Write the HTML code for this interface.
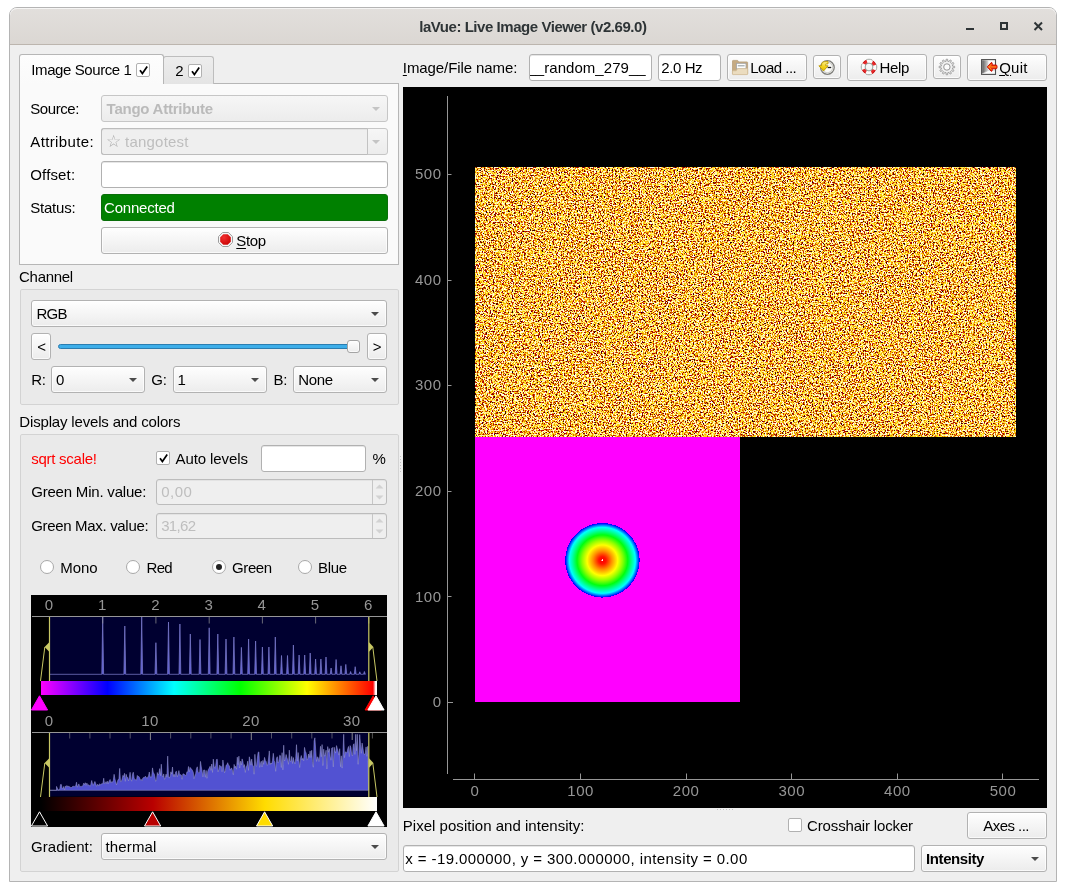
<!DOCTYPE html>
<html><head><meta charset="utf-8"><title>laVue: Live Image Viewer (v2.69.0)</title>
<style>
html,body{margin:0;padding:0;background:#fff;}
body{width:1066px;height:891px;overflow:hidden;position:relative;font-family:"Liberation Sans",sans-serif;font-size:15px;color:#000;}
#root{position:absolute;left:0;top:0;width:1066px;height:891px;overflow:hidden;transform:translateZ(0);will-change:transform;}
#root div,#root span,#root svg{position:absolute;box-sizing:border-box;}
.t{white-space:pre;display:block;}
.win{background:#efefef;border:1px solid #b4b4b4;border-radius:8px 8px 0 0;}
.tb{background:linear-gradient(#e2dfdc,#dbd7d3);border-bottom:1px solid #bcb5ae;border-radius:7px 7px 0 0;box-shadow:inset 0 1px 0 #f6f5f4;}
.btn{background:linear-gradient(#fefefe,#ececec);border:1px solid #b2b2b2;border-radius:3px;box-shadow:inset 0 0 0 1px rgba(255,255,255,.7);}
.dis{background:linear-gradient(#f6f6f6,#ececec);border:1px solid #c6c6c6;border-radius:3px;}
.le{background:#fff;border:1px solid #b1b1b1;border-radius:3px;box-shadow:inset 0 1px 0 #e6e6e6;overflow:hidden;}
.led{background:#efefef;border:1px solid #bcbcbc;border-radius:3px;box-shadow:inset 0 1px 0 #e3e3e3;}
.grp{background:#eaeaea;border:1px solid #d3d3d3;border-radius:2px;}
.pane{background:#fafafa;border:1px solid #b6b6b6;}
.tab1{background:linear-gradient(#fdfdfd,#fafafa);border:1px solid #b6b6b6;border-bottom:none;border-radius:3px 3px 0 0;}
.tab2{background:linear-gradient(#ededed,#e4e4e4);border:1px solid #bdbdbd;border-bottom:none;border-radius:3px 3px 0 0;}
.cb{background:#fff;border:1px solid #b1b1b1;border-radius:2px;}
.rb{background:#fff;border:1px solid #a9a9a9;border-radius:50%;}
.blk{background:#000;}
u{text-decoration:underline;text-underline-offset:1.5px;text-decoration-thickness:1px;}
</style></head><body><div id="root">
<div class="win" style="left:9px;top:7px;width:1048px;height:875px;"></div>
<div class="tb" style="left:10px;top:8px;width:1046px;height:37px;"></div>
<span class="t " style="left:419.20px;top:18px;font-size:15px;line-height:17px;letter-spacing:-0.452px;font-weight:bold;color:#2e3436;">laVue: Live Image Viewer (v2.69.0)</span>
<svg style="left:960px;top:16px" width="90" height="20" viewBox="0 0 90 20"><g fill="none" stroke="#2e3436" stroke-width="2"><path d="M6 13H14"/><rect x="41" y="7" width="6" height="6"/><path d="M74.5 6.5L82 14M82 6.5L74.5 14"/></g></svg>
<div class="pane" style="left:19px;top:83px;width:380px;height:182px;"></div>
<div class="tab2" style="left:163px;top:56px;width:51px;height:28px;"></div>
<div class="tab1" style="left:19px;top:54px;width:145px;height:30px;"></div>
<div class="" style="left:20px;top:83px;width:143px;height:1px;background:#fafafa;"></div>
<span class="t " style="left:31.30px;top:61px;font-size:15px;line-height:17px;letter-spacing:-0.407px;">Image Source 1</span>
<div class="cb" style="left:136px;top:63px;width:14px;height:14px;"><svg style="left:1px;top:1px" width="11" height="11" viewBox="0 0 11 11"><path d="M2 5.2L4.4 8.6L9.2 1.6" fill="none" stroke="#000" stroke-width="1.7"/></svg></div>
<span class="t " style="left:175.30px;top:62px;font-size:15px;line-height:17px;letter-spacing:-0.150px;">2</span>
<div class="cb" style="left:188px;top:64px;width:14px;height:14px;"><svg style="left:1px;top:1px" width="11" height="11" viewBox="0 0 11 11"><path d="M2 5.2L4.4 8.6L9.2 1.6" fill="none" stroke="#000" stroke-width="1.7"/></svg></div>
<span class="t " style="left:30.30px;top:100px;font-size:15px;line-height:17px;letter-spacing:-0.432px;">Source:</span>
<div class="dis" style="left:101px;top:95px;width:287px;height:27px;"></div>
<span class="t " style="left:106.60px;top:100px;font-size:15px;line-height:17px;letter-spacing:-0.248px;font-weight:bold;color:#bababa;">Tango Attribute</span>
<svg class="a" style="left:372.3px;top:106.8px" width="8" height="4" viewBox="0 0 8 4"><path d="M0 0H8L4 4Z" fill="#c4c4c4"/></svg>
<span class="t " style="left:30.30px;top:133px;font-size:15px;line-height:17px;letter-spacing:0.364px;">Attribute:</span>
<div class="dis" style="left:101px;top:128px;width:287px;height:27px;"></div>
<div class="led" style="left:101px;top:128px;width:267px;height:27px;border-radius:3px 0 0 3px;border-right:1px solid #c2c2c2;"></div>
<span class="t " style="left:106.00px;top:132px;font-size:16.5px;line-height:18px;color:#adadad;font-family:"DejaVu Sans",sans-serif;">☆</span>
<span class="t " style="left:125.10px;top:133px;font-size:15px;line-height:17px;letter-spacing:0.199px;color:#bebebe;">tangotest</span>
<svg class="a" style="left:372.3px;top:139.8px" width="8" height="4" viewBox="0 0 8 4"><path d="M0 0H8L4 4Z" fill="#c4c4c4"/></svg>
<span class="t " style="left:30.30px;top:166px;font-size:15px;line-height:17px;letter-spacing:0.149px;">Offset:</span>
<div class="le" style="left:101px;top:161px;width:287px;height:27px;"></div>
<span class="t " style="left:30.30px;top:199px;font-size:15px;line-height:17px;letter-spacing:-0.232px;">Status:</span>
<div class="" style="left:101px;top:194px;width:287px;height:27px;background:#008000;border:1px solid #0a6e0a;border-radius:3px;"></div>
<span class="t " style="left:104.10px;top:199px;font-size:15px;line-height:17px;letter-spacing:-0.219px;color:#fff;">Connected</span>
<div class="btn" style="left:101px;top:227px;width:287px;height:27px;"></div>
<svg style="left:217px;top:231px" width="17" height="17" viewBox="0 0 17 17"><defs><radialGradient id="sg" cx=".35" cy=".3" r=".8"><stop offset="0" stop-color="#f23030"/><stop offset="1" stop-color="#c80000"/></radialGradient></defs><path d="M5.6 1.5H11.4L15.5 5.6V11.4L11.4 15.5H5.6L1.5 11.4V5.6Z" fill="#f6f6f6" stroke="#9c9c9c" stroke-width="1"/><path d="M6.3 3.2H10.7L13.8 6.3V10.7L10.7 13.8H6.3L3.2 10.7V6.3Z" fill="url(#sg)"/></svg>
<span class="t " style="left:236.30px;top:232px;font-size:15px;line-height:17px;letter-spacing:-0.352px;"><u>S</u>top</span>
<span class="t " style="left:19.10px;top:268px;font-size:15px;line-height:17px;letter-spacing:-0.312px;">Channel</span>
<div class="grp" style="left:20px;top:289px;width:379px;height:116px;"></div>
<div class="btn" style="left:31px;top:300px;width:356px;height:27px;"></div>
<span class="t " style="left:36.40px;top:305px;font-size:15px;line-height:17px;letter-spacing:-0.700px;">RGB</span>
<svg class="a" style="left:371.3px;top:311.8px" width="8" height="4" viewBox="0 0 8 4"><path d="M0 0H8L4 4Z" fill="#4b4b4b"/></svg>
<div class="btn" style="left:31px;top:333px;width:20px;height:27px;"></div>
<span class="t " style="left:37.20px;top:338px;font-size:15px;line-height:17px;letter-spacing:-0.150px;">&lt;</span>
<div class="btn" style="left:367px;top:333px;width:20px;height:27px;"></div>
<span class="t " style="left:372.80px;top:338px;font-size:15px;line-height:17px;letter-spacing:-0.150px;">&gt;</span>
<div class="" style="left:58px;top:344px;width:296px;height:5px;background:#3daee9;border:1px solid #2b7db0;border-radius:2.5px;"></div>
<div class="btn" style="left:347px;top:340px;width:13px;height:13px;border-color:#a4a4a4;"></div>
<span class="t " style="left:31.20px;top:371px;font-size:15px;line-height:17px;letter-spacing:-0.150px;">R:</span>
<div class="btn" style="left:51px;top:366px;width:94px;height:27px;"></div>
<span class="t " style="left:56.10px;top:371px;font-size:15px;line-height:17px;letter-spacing:-0.150px;">0</span>
<svg class="a" style="left:129.3px;top:377.8px" width="8" height="4" viewBox="0 0 8 4"><path d="M0 0H8L4 4Z" fill="#4b4b4b"/></svg>
<span class="t " style="left:151.20px;top:371px;font-size:15px;line-height:17px;letter-spacing:-0.150px;">G:</span>
<div class="btn" style="left:173px;top:366px;width:94px;height:27px;"></div>
<span class="t " style="left:177.60px;top:371px;font-size:15px;line-height:17px;letter-spacing:-0.150px;">1</span>
<svg class="a" style="left:251.3px;top:377.8px" width="8" height="4" viewBox="0 0 8 4"><path d="M0 0H8L4 4Z" fill="#4b4b4b"/></svg>
<span class="t " style="left:273.40px;top:371px;font-size:15px;line-height:17px;letter-spacing:-0.150px;">B:</span>
<div class="btn" style="left:293px;top:366px;width:94px;height:27px;"></div>
<span class="t " style="left:298.20px;top:371px;font-size:15px;line-height:17px;letter-spacing:-0.286px;">None</span>
<svg class="a" style="left:371.3px;top:377.8px" width="8" height="4" viewBox="0 0 8 4"><path d="M0 0H8L4 4Z" fill="#4b4b4b"/></svg>
<span class="t " style="left:19.30px;top:413px;font-size:15px;line-height:17px;letter-spacing:-0.165px;">Display levels and colors</span>
<div class="grp" style="left:20px;top:434px;width:379px;height:438px;"></div>
<span class="t " style="left:31.20px;top:450px;font-size:15px;line-height:17px;letter-spacing:-0.255px;color:#f00;">sqrt scale!</span>
<div class="cb" style="left:156px;top:451px;width:14px;height:14px;"><svg style="left:1px;top:1px" width="11" height="11" viewBox="0 0 11 11"><path d="M2 5.2L4.4 8.6L9.2 1.6" fill="none" stroke="#000" stroke-width="1.7"/></svg></div>
<span class="t " style="left:175.60px;top:450px;font-size:15px;line-height:17px;letter-spacing:-0.107px;">Auto levels</span>
<div class="le" style="left:261px;top:445px;width:105px;height:27px;"></div>
<span class="t " style="left:372.50px;top:450px;font-size:15px;line-height:17px;letter-spacing:-0.150px;">%</span>
<span class="t " style="left:31.20px;top:483px;font-size:15px;line-height:17px;letter-spacing:-0.199px;">Green Min. value:</span>
<div class="led" style="left:156px;top:479px;width:231px;height:26px;"></div>
<div class="" style="left:372px;top:480px;width:1px;height:24px;background:#c6c6c6;"></div>
<span class="t " style="left:161.20px;top:483px;font-size:15px;line-height:17px;letter-spacing:0.470px;color:#bebebe;">0,00</span>
<span class="t " style="left:31.20px;top:517px;font-size:15px;line-height:17px;letter-spacing:-0.322px;">Green Max. value:</span>
<div class="led" style="left:156px;top:513px;width:231px;height:26px;"></div>
<div class="" style="left:372px;top:514px;width:1px;height:24px;background:#c6c6c6;"></div>
<span class="t " style="left:161.20px;top:517px;font-size:15px;line-height:17px;letter-spacing:-0.658px;color:#bebebe;">31,62</span>
<svg style="left:375px;top:482px" width="9" height="20" viewBox="0 0 9 20"><path d="M0.5 6.5L4.5 2.5L8.5 6.5Z" fill="#d2d2d2"/><path d="M0.5 13.5L4.5 17.5L8.5 13.5Z" fill="#d2d2d2"/></svg>
<svg style="left:375px;top:516px" width="9" height="20" viewBox="0 0 9 20"><path d="M0.5 6.5L4.5 2.5L8.5 6.5Z" fill="#d2d2d2"/><path d="M0.5 13.5L4.5 17.5L8.5 13.5Z" fill="#d2d2d2"/></svg>
<div class="rb" style="left:39.8px;top:560px;width:14px;height:14px;"></div>
<span class="t " style="left:60.30px;top:559px;font-size:15px;line-height:17px;letter-spacing:-0.073px;">Mono</span>
<div class="rb" style="left:125.7px;top:560px;width:14px;height:14px;"></div>
<span class="t " style="left:146.60px;top:559px;font-size:15px;line-height:17px;letter-spacing:-0.700px;">Red</span>
<div class="rb" style="left:212px;top:560px;width:14px;height:14px;"><div style="left:3px;top:3px;width:6px;height:6px;border-radius:50%;background:#222"></div></div>
<span class="t " style="left:232.10px;top:559px;font-size:15px;line-height:17px;letter-spacing:-0.421px;">Green</span>
<div class="rb" style="left:298px;top:560px;width:14px;height:14px;"></div>
<span class="t " style="left:318.00px;top:559px;font-size:15px;line-height:17px;letter-spacing:-0.307px;">Blue</span>
<span class="t " style="left:31.10px;top:838px;font-size:15px;line-height:17px;letter-spacing:0.013px;">Gradient:</span>
<div class="btn" style="left:101px;top:833px;width:286px;height:27px;"></div>
<span class="t " style="left:105.40px;top:838px;font-size:15px;line-height:17px;letter-spacing:0.164px;">thermal</span>
<svg class="a" style="left:371.3px;top:844.8px" width="8" height="4" viewBox="0 0 8 4"><path d="M0 0H8L4 4Z" fill="#4b4b4b"/></svg>
<div class="blk" style="left:31px;top:595px;width:356px;height:232px;"></div>
<svg style="left:31px;top:595px" width="356" height="232" viewBox="31 595 356 232"><defs><linearGradient id="gs" x1="0" x2="1" y1="0" y2="0"><stop offset="0" stop-color="#f0f"/><stop offset=".198" stop-color="#00f"/><stop offset=".396" stop-color="#0ff"/><stop offset=".594" stop-color="#0f0"/><stop offset=".792" stop-color="#ff0"/><stop offset=".988" stop-color="#f00"/><stop offset=".996" stop-color="#fff"/><stop offset="1" stop-color="#fff"/></linearGradient><linearGradient id="gt" x1="0" x2="1" y1="0" y2="0"><stop offset="0" stop-color="#000"/><stop offset=".3333" stop-color="#b90000"/><stop offset=".6666" stop-color="#ffdc00"/><stop offset="1" stop-color="#fff"/></linearGradient></defs><rect x="49.5" y="616" width="319.3" height="64.5" fill="#000030"/><rect x="41" y="681" width="336" height="14" fill="url(#gs)"/><path d="M49.5 674.3 H101.8 L102.7 617.0 L103.6 674.3 H123.9 L124.8 626.0 L125.7 674.3 H140.8 L141.7 617.0 L142.6 674.3 H155.0 L155.9 642.7 L156.8 674.3 H167.6 L168.5 622.0 L169.4 674.3 H179.0 L179.9 624.0 L180.8 674.3 H189.4 L190.3 634.0 L191.2 674.3 H199.1 L200.0 639.5 L200.9 674.3 H208.3 L209.2 627.8 L210.1 674.3 H216.9 L217.8 634.0 L218.7 674.3 H225.1 L226.0 639.0 L226.9 674.3 H233.0 L233.9 637.0 L234.8 674.3 H240.5 L241.4 647.4 L242.3 674.3 H247.7 L248.6 639.0 L249.5 674.3 H254.7 L255.6 641.0 L256.5 674.3 H261.5 L262.4 647.0 L263.3 674.3 H268.0 L268.9 647.0 L269.8 674.3 H274.4 L275.3 637.0 L276.2 674.3 H280.6 L281.5 655.5 L282.4 674.3 H286.6 L287.5 655.5 L288.4 674.3 H292.5 L293.4 645.0 L294.3 674.3 H298.2 L299.1 655.0 L300.0 674.3 H303.8 L304.7 655.0 L305.6 674.3 H309.3 L310.2 653.0 L311.1 674.3 H314.7 L315.6 659.0 L316.5 674.3 H320.0 L320.9 659.0 L321.8 674.3 H325.1 L326.0 657.0 L326.9 674.3 H330.2 L331.1 668.0 L332.0 674.3 H335.2 L336.1 659.5 L337.0 674.3 H340.1 L341.0 665.8 L341.9 674.3 H344.9 L345.8 664.4 L346.7 674.3 H349.7 L350.6 671.5 L351.5 674.3 H354.3 L355.2 666.7 L356.1 674.3 H358.9 L359.8 671.8 L360.7 674.3 H363.5 L364.4 671.5 L365.3 674.3 H364.5" fill="#5a5ad2" stroke="#7878c8" stroke-width="0.9" stroke-linejoin="miter" stroke-opacity=".85"/><path d="M49.5 617 V623.5" stroke="#969696" stroke-width="1" stroke-opacity=".7"/><path d="M102.7 617 V623.5" stroke="#969696" stroke-width="1" stroke-opacity=".7"/><path d="M155.9 617 V623.5" stroke="#969696" stroke-width="1" stroke-opacity=".7"/><path d="M209.2 617 V623.5" stroke="#969696" stroke-width="1" stroke-opacity=".7"/><path d="M262.4 617 V623.5" stroke="#969696" stroke-width="1" stroke-opacity=".7"/><path d="M315.6 617 V623.5" stroke="#969696" stroke-width="1" stroke-opacity=".7"/><path d="M368.8 617 V623.5" stroke="#969696" stroke-width="1" stroke-opacity=".7"/><path d="M32 616.5 H387" stroke="#969696" stroke-width="1" fill="none"/><g stroke="#c8c864" fill="none" stroke-width="1.2"><path d="M49.5 617 V681"/><path d="M368.8 617 V681"/><path d="M40.5 681 L44.8 647" stroke-width="1"/><path d="M377 681 L372.8 647" stroke-width="1"/></g><path d="M49.5 642 L44.6 647 L49.5 652 Z" fill="#c8c864"/><path d="M368.8 642 L373.4 647 L368.8 652 Z" fill="#c8c864"/><path d="M39.5 695.8 L47.6 710 H31.4 Z" fill="#f0f" stroke="#f0f" stroke-width="1" stroke-linejoin="miter"/><path d="M373.2 695.8 L381.3 710 H365.1 Z" fill="#f00" stroke="#f00" stroke-width="1" stroke-linejoin="miter"/><path d="M376 695.8 L384.1 710 H367.9 Z" fill="#fff" stroke="#fff" stroke-width="1" stroke-linejoin="miter"/><rect x="49.5" y="732" width="319.3" height="64.5" fill="#000030"/><rect x="41" y="797" width="336" height="14" fill="url(#gt)"/><path d="M49.5 790.3 H56.5 L56.5 786.4 L57.3 788.1 L58.1 790.1 L58.9 789.8 L59.7 789.6 L60.5 784.6 L61.3 784.4 L62.1 788.6 L62.9 788.4 L63.7 786.5 L64.5 789.9 L65.3 786.2 L66.1 786.8 L66.9 785.5 L67.7 786.9 L68.5 785.9 L69.3 786.7 L70.1 787.2 L70.9 787.5 L71.7 787.5 L72.5 786.5 L73.3 786.3 L74.1 786.4 L74.9 786.4 L75.7 786.0 L76.5 782.2 L77.3 787.2 L78.1 785.4 L78.9 783.9 L79.7 786.7 L80.5 786.4 L81.3 786.4 L82.1 786.2 L82.9 785.7 L83.7 783.2 L84.5 784.6 L85.3 782.7 L86.1 785.4 L86.9 783.1 L87.7 785.4 L88.5 784.8 L89.3 785.2 L90.1 786.4 L90.9 784.3 L91.7 780.5 L92.5 783.9 L93.3 785.4 L94.1 783.2 L94.9 781.5 L95.7 783.6 L96.5 786.4 L97.3 784.5 L98.1 784.6 L98.9 786.1 L99.7 783.7 L100.5 784.7 L101.3 784.1 L102.1 783.4 L102.9 783.9 L103.7 778.2 L104.5 783.9 L105.3 783.1 L106.1 781.6 L106.9 783.8 L107.7 781.2 L108.5 783.6 L109.3 780.7 L110.1 779.5 L110.9 782.9 L111.7 781.7 L112.5 782.2 L113.3 780.6 L114.1 774.3 L114.9 778.9 L115.7 781.8 L116.5 785.0 L117.3 781.9 L118.1 779.5 L118.9 779.4 L119.7 768.4 L120.5 781.6 L121.3 781.6 L122.1 779.1 L122.9 775.4 L123.7 776.6 L124.5 773.3 L125.3 781.3 L126.1 774.3 L126.9 777.1 L127.7 777.6 L128.5 781.0 L129.3 777.2 L130.1 772.3 L130.9 779.2 L131.7 781.2 L132.5 774.3 L133.3 772.2 L134.1 778.1 L134.9 779.9 L135.7 779.7 L136.5 780.2 L137.3 775.4 L138.1 776.7 L138.9 776.5 L139.7 778.1 L140.5 780.2 L141.3 779.4 L142.1 780.7 L142.9 777.9 L143.7 777.4 L144.5 777.5 L145.3 776.2 L146.1 777.1 L146.9 778.3 L147.7 777.2 L148.5 775.9 L149.3 772.0 L150.1 776.8 L150.9 777.0 L151.7 776.8 L152.5 767.9 L153.3 772.8 L154.1 773.5 L154.9 776.6 L155.7 781.3 L156.5 779.7 L157.3 772.5 L158.1 775.0 L158.9 773.7 L159.7 768.6 L160.5 775.6 L161.3 764.2 L162.1 775.3 L162.9 776.9 L163.7 773.9 L164.5 779.4 L165.3 777.6 L166.1 774.1 L166.9 777.2 L167.7 756.1 L168.5 775.9 L169.3 778.1 L170.1 776.4 L170.9 771.8 L171.7 774.1 L172.5 767.0 L173.3 776.5 L174.1 774.2 L174.9 776.8 L175.7 771.8 L176.5 771.3 L177.3 776.9 L178.1 774.3 L178.9 770.6 L179.7 775.4 L180.5 774.6 L181.3 775.0 L182.1 779.3 L182.9 773.9 L183.7 773.9 L184.5 774.5 L185.3 775.5 L186.1 775.4 L186.9 771.8 L187.7 772.2 L188.5 766.5 L189.3 771.9 L190.1 767.4 L190.9 768.4 L191.7 769.3 L192.5 770.5 L193.3 772.4 L194.1 778.7 L194.9 775.7 L195.7 773.4 L196.5 768.5 L197.3 766.8 L198.1 772.2 L198.9 773.0 L199.7 772.2 L200.5 761.4 L201.3 767.0 L202.1 771.2 L202.9 776.8 L203.7 770.0 L204.5 769.9 L205.3 777.2 L206.1 770.4 L206.9 778.3 L207.7 771.5 L208.5 769.2 L209.3 768.1 L210.1 766.3 L210.9 770.4 L211.7 764.0 L212.5 772.4 L213.3 759.1 L214.1 766.2 L214.9 768.4 L215.7 765.8 L216.5 759.5 L217.3 759.3 L218.1 771.9 L218.9 769.2 L219.7 765.2 L220.5 766.8 L221.3 766.3 L222.1 771.7 L222.9 760.0 L223.7 766.1 L224.5 772.8 L225.3 770.8 L226.1 765.2 L226.9 765.0 L227.7 762.7 L228.5 765.3 L229.3 765.7 L230.1 770.2 L230.9 768.6 L231.7 768.1 L232.5 770.5 L233.3 774.8 L234.1 764.4 L234.9 767.8 L235.7 766.2 L236.5 769.2 L237.3 757.2 L238.1 764.6 L238.9 756.2 L239.7 768.0 L240.5 761.2 L241.3 765.0 L242.1 758.9 L242.9 761.4 L243.7 767.3 L244.5 764.6 L245.3 772.4 L246.1 766.4 L246.9 765.9 L247.7 761.2 L248.5 770.4 L249.3 756.8 L250.1 760.2 L250.9 765.2 L251.7 759.1 L252.5 765.1 L253.3 765.8 L254.1 774.2 L254.9 754.3 L255.7 765.6 L256.5 766.2 L257.3 758.7 L258.1 752.4 L258.9 751.9 L259.7 767.3 L260.5 763.2 L261.3 761.2 L262.1 767.0 L262.9 760.4 L263.7 764.3 L264.5 757.4 L265.3 760.5 L266.1 761.4 L266.9 765.3 L267.7 764.8 L268.5 759.0 L269.3 750.9 L270.1 764.7 L270.9 763.0 L271.7 764.0 L272.5 760.4 L273.3 753.3 L274.1 760.7 L274.9 762.6 L275.7 771.3 L276.5 758.3 L277.3 756.7 L278.1 762.9 L278.9 761.4 L279.7 755.3 L280.5 755.8 L281.3 767.5 L282.1 752.7 L282.9 769.8 L283.7 745.2 L284.5 761.0 L285.3 759.3 L286.1 754.5 L286.9 757.7 L287.7 759.7 L288.5 764.3 L289.3 750.1 L290.1 761.1 L290.9 761.6 L291.7 756.4 L292.5 763.5 L293.3 757.5 L294.1 761.6 L294.9 763.9 L295.7 758.6 L296.5 744.7 L297.3 761.1 L298.1 752.5 L298.9 760.0 L299.7 767.5 L300.5 758.5 L301.3 755.5 L302.1 760.1 L302.9 758.2 L303.7 760.8 L304.5 747.4 L305.3 751.3 L306.1 753.0 L306.9 760.1 L307.7 759.1 L308.5 754.0 L309.3 757.5 L310.1 750.9 L310.9 757.5 L311.7 750.3 L312.5 761.6 L313.3 767.2 L314.1 741.0 L314.9 737.8 L315.7 750.2 L316.5 761.4 L317.3 756.9 L318.1 757.4 L318.9 761.5 L319.7 757.0 L320.5 746.3 L321.3 756.7 L322.1 744.6 L322.9 765.6 L323.7 749.2 L324.5 756.2 L325.3 754.7 L326.1 750.2 L326.9 769.0 L327.7 746.6 L328.5 752.2 L329.3 748.6 L330.1 756.2 L330.9 760.2 L331.7 748.1 L332.5 747.6 L333.3 766.9 L334.1 747.2 L334.9 751.0 L335.7 753.1 L336.5 745.6 L337.3 748.5 L338.1 751.3 L338.9 755.1 L339.7 748.7 L340.5 766.7 L341.3 755.8 L342.1 768.1 L342.9 754.5 L343.7 734.3 L344.5 757.7 L345.3 751.8 L346.1 752.5 L346.9 752.8 L347.7 749.1 L348.5 746.5 L349.3 756.6 L350.1 745.6 L350.9 747.7 L351.7 754.6 L352.5 755.8 L353.3 744.8 L354.1 743.7 L354.9 754.4 L355.7 734.3 L356.5 750.7 L357.3 734.3 L358.1 764.3 L358.9 754.6 L359.7 734.6 L360.5 744.5 L361.3 753.3 L362.1 743.1 L362.9 748.1 L363.7 753.6 L364.5 754.6 L365.3 752.9 L366.1 746.9 L366.9 756.3 L367.7 746.3 L368.5 790.3 Z" fill="#5252d2" stroke="#9a9ad0" stroke-width="0.7" stroke-linejoin="round" stroke-opacity=".75"/><path d="M49.5 733 V740.0" stroke="#969696" stroke-width="1" stroke-opacity=".9"/><path d="M69.7 733 V738.5" stroke="#969696" stroke-width="1" stroke-opacity=".55"/><path d="M89.9 733 V738.5" stroke="#969696" stroke-width="1" stroke-opacity=".55"/><path d="M110.0 733 V738.5" stroke="#969696" stroke-width="1" stroke-opacity=".55"/><path d="M130.2 733 V738.5" stroke="#969696" stroke-width="1" stroke-opacity=".55"/><path d="M150.4 733 V740.0" stroke="#969696" stroke-width="1" stroke-opacity=".9"/><path d="M170.6 733 V738.5" stroke="#969696" stroke-width="1" stroke-opacity=".55"/><path d="M190.8 733 V738.5" stroke="#969696" stroke-width="1" stroke-opacity=".55"/><path d="M210.9 733 V738.5" stroke="#969696" stroke-width="1" stroke-opacity=".55"/><path d="M231.1 733 V738.5" stroke="#969696" stroke-width="1" stroke-opacity=".55"/><path d="M251.3 733 V740.0" stroke="#969696" stroke-width="1" stroke-opacity=".9"/><path d="M271.5 733 V738.5" stroke="#969696" stroke-width="1" stroke-opacity=".55"/><path d="M291.7 733 V738.5" stroke="#969696" stroke-width="1" stroke-opacity=".55"/><path d="M311.8 733 V738.5" stroke="#969696" stroke-width="1" stroke-opacity=".55"/><path d="M332.0 733 V738.5" stroke="#969696" stroke-width="1" stroke-opacity=".55"/><path d="M352.2 733 V740.0" stroke="#969696" stroke-width="1" stroke-opacity=".9"/><path d="M372.4 733 V738.5" stroke="#969696" stroke-width="1" stroke-opacity=".55"/><path d="M32 732.5 H387" stroke="#969696" stroke-width="1" fill="none"/><g stroke="#c8c864" fill="none" stroke-width="1.2"><path d="M49.5 733 V797"/><path d="M368.8 733 V797"/><path d="M40.5 797 L44.8 763" stroke-width="1"/><path d="M377 797 L372.8 763" stroke-width="1"/></g><path d="M49.5 758 L44.6 763 L49.5 768 Z" fill="#c8c864"/><path d="M368.8 758 L373.4 763 L368.8 768 Z" fill="#c8c864"/><path d="M39.5 811.8 L47.6 826 H31.4 Z" fill="#000" stroke="#fff" stroke-width="1" stroke-linejoin="miter"/><path d="M152.6 811.8 L160.7 826 H144.5 Z" fill="#b90000" stroke="#fff" stroke-width="1" stroke-linejoin="miter"/><path d="M264.6 811.8 L272.7 826 H256.5 Z" fill="#ffdc00" stroke="#fff" stroke-width="1" stroke-linejoin="miter"/><path d="M376 811.8 L384.1 826 H367.9 Z" fill="#fff" stroke="#fff" stroke-width="1" stroke-linejoin="miter"/></svg>
<span class="t " style="left:44.73px;top:596px;font-size:15px;line-height:17px;color:#969696;">0</span>
<span class="t " style="left:97.95px;top:596px;font-size:15px;line-height:17px;color:#969696;">1</span>
<span class="t " style="left:151.17px;top:596px;font-size:15px;line-height:17px;color:#969696;">2</span>
<span class="t " style="left:204.39px;top:596px;font-size:15px;line-height:17px;color:#969696;">3</span>
<span class="t " style="left:257.61px;top:596px;font-size:15px;line-height:17px;color:#969696;">4</span>
<span class="t " style="left:310.83px;top:596px;font-size:15px;line-height:17px;color:#969696;">5</span>
<span class="t " style="left:364.05px;top:596px;font-size:15px;line-height:17px;color:#969696;">6</span>
<span class="t " style="left:44.73px;top:712px;font-size:15px;line-height:17px;color:#969696;">0</span>
<span class="t " style="left:141.26px;top:712px;font-size:15px;line-height:17px;letter-spacing:0.400px;color:#969696;">10</span>
<span class="t " style="left:242.16px;top:712px;font-size:15px;line-height:17px;letter-spacing:0.400px;color:#969696;">20</span>
<span class="t " style="left:343.06px;top:712px;font-size:15px;line-height:17px;letter-spacing:0.400px;color:#969696;">30</span>
<span class="t " style="left:402.80px;top:59px;font-size:15px;line-height:17px;letter-spacing:-0.085px;"><u>I</u>mage/File name:</span>
<div class="le" style="left:529px;top:54px;width:123px;height:27px;"><span class="t" style="left:-2.6px;top:4px;font-size:15px;line-height:17px;letter-spacing:.05px">__random_279__</span></div>
<div class="le" style="left:658px;top:54px;width:63px;height:27px;"></div>
<span class="t " style="left:661.30px;top:59px;font-size:15px;line-height:17px;letter-spacing:-0.410px;">2.0 Hz</span>
<div class="btn" style="left:727px;top:54px;width:80px;height:27px;"></div>
<span class="t " style="left:750.30px;top:59px;font-size:15px;line-height:17px;letter-spacing:-0.519px;">Load ...</span>
<div class="btn" style="left:813px;top:55px;width:28px;height:24px;"></div>
<div class="btn" style="left:847px;top:54px;width:80px;height:27px;"></div>
<span class="t " style="left:879.60px;top:59px;font-size:15px;line-height:17px;letter-spacing:-0.349px;">Help</span>
<div class="btn" style="left:933px;top:55px;width:28px;height:24px;"></div>
<div class="btn" style="left:967px;top:54px;width:80px;height:27px;"></div>
<span class="t " style="left:999.20px;top:59px;font-size:15px;line-height:17px;letter-spacing:0.230px;"><u>Q</u>uit</span>
<svg style="left:730px;top:58px" width="20" height="19" viewBox="730 58 20 19"><path d="M732.5 61Q732.5 60.4 733.1 60.4H737.6L738.8 61.9H747Q747.6 61.9 747.6 62.5V74H732.5Z" fill="#c5aa82" stroke="#b39a72" stroke-width=".7"/><rect x="736.4" y="63.3" width="9.6" height="5.6" fill="#fdfdfd" stroke="#a2a2a2" stroke-width=".8"/><path d="M737.8 65.8H744.6" stroke="#8e979c" stroke-width="1"/><path d="M732.4 71.4Q732.4 70.8 733 70.8H736.2L737.6 68.6H747Q747.7 68.6 747.7 69.2V73.9Q747.7 74.6 747 74.6H733.1Q732.4 74.6 732.4 73.9Z" fill="#ebdcbf" stroke="#d1bb95" stroke-width=".7"/></svg>
<svg style="left:817px;top:58px" width="20" height="19" viewBox="817 58 20 19"><defs><linearGradient id="yg" x1="0" x2="0" y1="0" y2="1"><stop offset="0" stop-color="#fdf08a"/><stop offset=".55" stop-color="#f3d21c"/><stop offset="1" stop-color="#e0b800"/></linearGradient></defs><circle cx="827.4" cy="67.5" r="6.8" fill="#fbfbf9" stroke="#7e7e7a" stroke-width="1.3"/><circle cx="827.4" cy="67.5" r="5.3" fill="none" stroke="#d2d2ce" stroke-width="1.2"/><path d="M827.6 67.5H831.2" stroke="#1e1e1e" stroke-width="1.3" fill="none"/><path d="M823.5 71L818.9 65.8H821.6V64Q821.8 61.7 824.6 61.6H828V63.9H826.5Q825.7 63.7 825.7 64.5V65.8H828.1Z" fill="url(#yg)" stroke="#bd9b00" stroke-width=".9" stroke-linejoin="round"/></svg>
<svg style="left:860px;top:58px" width="18" height="18" viewBox="860 58 18 18"><circle cx="869" cy="67" r="5.85" fill="none" stroke="#fafafa" stroke-width="3.9"/><circle cx="869" cy="67" r="5.85" fill="none" stroke="#e8282a" stroke-width="3.5" stroke-dasharray="3.6 5.59" stroke-dashoffset="-2.8"/><circle cx="869" cy="67" r="7.1" fill="none" stroke="#b01010" stroke-width=".9" stroke-dasharray="4.3 6.85" stroke-dashoffset="-3.42" opacity=".8"/><circle cx="869" cy="67" r="7.75" fill="none" stroke="#8f968f" stroke-width=".8" stroke-dasharray="6 6.17" stroke-dashoffset="3"/><circle cx="869" cy="67" r="3.9" fill="none" stroke="#8a948f" stroke-width=".9"/></svg>
<svg style="left:938px;top:58px" width="18" height="18" viewBox="938 58 18 18"><path d="M952.63 66.08 L954.67 66.30 L954.67 67.70 L952.63 67.92 L952.32 69.06 L953.98 70.28 L953.28 71.49 L951.40 70.66 L950.56 71.50 L951.39 73.38 L950.18 74.08 L948.96 72.42 L947.82 72.73 L947.60 74.77 L946.20 74.77 L945.98 72.73 L944.84 72.42 L943.62 74.08 L942.41 73.38 L943.24 71.50 L942.40 70.66 L940.52 71.49 L939.82 70.28 L941.48 69.06 L941.17 67.92 L939.13 67.70 L939.13 66.30 L941.17 66.08 L941.48 64.94 L939.82 63.72 L940.52 62.51 L942.40 63.34 L943.24 62.50 L942.41 60.62 L943.62 59.92 L944.84 61.58 L945.98 61.27 L946.20 59.23 L947.60 59.23 L947.82 61.27 L948.96 61.58 L950.18 59.92 L951.39 60.62 L950.56 62.50 L951.40 63.34 L953.28 62.51 L953.98 63.72 L952.32 64.94 Z" fill="#e6e6e6" stroke="#a2a2a2" stroke-width="1" stroke-linejoin="round"/><circle cx="946.9" cy="67" r="4.4" fill="none" stroke="#f3f3f3" stroke-width="1.2"/><circle cx="946.9" cy="67" r="3.2" fill="#fcfcfc" stroke="#9a9a9a" stroke-width="1"/></svg>
<svg style="left:980px;top:58px" width="19" height="18" viewBox="980 58 19 18"><defs><linearGradient id="dg" x1="0" x2="1"><stop offset="0" stop-color="#5c5c5c"/><stop offset="1" stop-color="#dedede"/></linearGradient></defs><rect x="981.6" y="59.6" width="13.9" height="14.8" fill="#fbfbfb" stroke="#4e4e4e" stroke-width="1.1"/><path d="M982.2 74V70.5L988.4 70.2L982.2 74Z" fill="#c8c8c8"/><path d="M982.2 60.2H988.5V70.2L982.2 73.8Z" fill="url(#dg)"/><path d="M982.3 73.8L988.5 70.3H995" fill="none" stroke="#c9c9c9" stroke-width=".7"/><path d="M987.3 66.9L991.2 62.6Q992.1 62.3 992.2 63.3V65H996.1Q997 65.2 997 66V67.8Q997 68.6 996.1 68.8H992.2V70.5Q992.1 71.5 991.2 71.2Z" fill="#f03a08" stroke="#c40000" stroke-width=".9" stroke-linejoin="round"/><path d="M988.9 66.9H996M988.9 66.9L991.2 64.4M988.9 66.9L991.2 69.4" fill="none" stroke="#ff9a28" stroke-width=".9" stroke-linecap="round"/></svg>
<div class="blk" style="left:403px;top:87px;width:644px;height:721px;"></div>
<svg style="left:403px;top:87px" width="644" height="721" viewBox="403 87 644 721"><defs><filter id="nz" x="0" y="0" width="100%" height="100%" color-interpolation-filters="sRGB"><feTurbulence type="fractalNoise" baseFrequency="0.73" numOctaves="1" seed="3" result="a"/><feTurbulence type="fractalNoise" baseFrequency="0.57" numOctaves="1" seed="8" result="b"/><feTurbulence type="fractalNoise" baseFrequency="0.89" numOctaves="1" seed="21" result="c"/><feComposite in="a" in2="b" operator="arithmetic" k1="0" k2=".5" k3=".5" k4="0" result="ab"/><feComposite in="ab" in2="c" operator="arithmetic" k1="0" k2=".6667" k3=".3333" k4="0"/><feColorMatrix type="matrix" values="1.6 0 0 0 -.3  1.6 0 0 0 -.3  1.6 0 0 0 -.3  0 0 0 0 1"/><feComponentTransfer><feFuncR type="table" tableValues="0 0 0 0 0 0 0 0 0 0 0 0 0 0 0 0 0 0 0 0 0 0 0 0 0 0 0.01 0.01 0.01 0.01 0.01 0.01 0.01 0.01 0.01 0.01 0.01 0.01 0.02 0.02 0.02 0.02 0.02 0.03 0.03 0.03 0.04 0.04 0.04 0.05 0.05 0.05 0.06 0.06 0.07 0.08 0.08 0.09 0.1 0.1 0.11 0.12 0.13 0.14 0.15 0.16 0.17 0.17 0.19 0.2 0.21 0.22 0.23 0.25 0.26 0.28 0.29 0.31 0.32 0.34 0.36 0.37 0.39 0.41 0.43 0.45 0.47 0.49 0.51 0.53 0.55 0.58 0.6 0.62 0.65 0.67 0.7 0.72 0.73 0.74 0.75 0.76 0.77 0.78 0.79 0.8 0.81 0.82 0.83 0.84 0.85 0.86 0.88 0.89 0.9 0.91 0.92 0.93 0.94 0.95 0.96 0.97 0.98 0.99 1 1 1 1 1 1 1 1 1 1 1 1 1 1 1 1 1 1 1 1 1 1 1 1 1 1 1 1 1 1 1 1 1 1 1 1 1 1 1 1 1 1 1 1 1 1 1 1 1 1 1 1 1 1 1 1 1 1 1 1 1 1 1 1 1 1 1 1 1 1 1 1 1 1 1 1 1 1 1 1 1 1 1 1 1 1 1 1 1 1 1 1 1 1 1 1 1 1 1 1 1 1 1 1 1 1 1 1 1 1 1 1 1 1 1 1 1 1 1 1 1 1 1 1 1 1 1 1 1 1 1 1"/><feFuncG type="table" tableValues="0 0 0 0 0 0 0 0 0 0 0 0 0 0 0 0 0 0 0 0 0 0 0 0 0 0 0 0 0 0 0 0 0 0 0 0 0 0 0 0 0 0 0 0 0 0 0 0 0 0 0 0 0 0 0 0 0 0 0 0 0 0 0 0 0 0 0 0 0 0 0 0 0 0 0 0 0 0 0 0 0 0 0 0 0 0 0 0 0 0 0 0 0 0 0 0 0 0 0.03 0.06 0.08 0.11 0.15 0.18 0.21 0.24 0.27 0.31 0.34 0.37 0.41 0.44 0.47 0.5 0.54 0.57 0.6 0.64 0.67 0.7 0.73 0.77 0.8 0.83 0.86 0.87 0.87 0.88 0.88 0.89 0.89 0.89 0.9 0.9 0.91 0.91 0.91 0.92 0.92 0.93 0.93 0.93 0.94 0.94 0.94 0.95 0.95 0.95 0.95 0.96 0.96 0.96 0.96 0.97 0.97 0.97 0.97 0.97 0.98 0.98 0.98 0.98 0.98 0.98 0.98 0.99 0.99 0.99 0.99 0.99 0.99 0.99 0.99 0.99 0.99 0.99 0.99 1 1 1 1 1 1 1 1 1 1 1 1 1 1 1 1 1 1 1 1 1 1 1 1 1 1 1 1 1 1 1 1 1 1 1 1 1 1 1 1 1 1 1 1 1 1 1 1 1 1 1 1 1 1 1 1 1 1 1 1 1 1 1 1 1 1 1 1 1 1 1 1 1 1 1 1 1 1 1"/><feFuncB type="table" tableValues="0 0 0 0 0 0 0 0 0 0 0 0 0 0 0 0 0 0 0 0 0 0 0 0 0 0 0 0 0 0 0 0 0 0 0 0 0 0 0 0 0 0 0 0 0 0 0 0 0 0 0 0 0 0 0 0 0 0 0 0 0 0 0 0 0 0 0 0 0 0 0 0 0 0 0 0 0 0 0 0 0 0 0 0 0 0 0 0 0 0 0 0 0 0 0 0 0 0 0 0 0 0 0 0 0 0 0 0 0 0 0 0 0 0 0 0 0 0 0 0 0 0 0 0 0 0.03 0.06 0.09 0.12 0.17 0.2 0.23 0.26 0.29 0.32 0.35 0.38 0.41 0.44 0.46 0.49 0.51 0.54 0.56 0.58 0.61 0.63 0.65 0.67 0.69 0.7 0.72 0.74 0.75 0.77 0.78 0.8 0.81 0.82 0.83 0.85 0.86 0.87 0.88 0.89 0.9 0.9 0.91 0.92 0.92 0.93 0.94 0.94 0.95 0.95 0.96 0.96 0.96 0.97 0.97 0.97 0.98 0.98 0.98 0.98 0.99 0.99 0.99 0.99 0.99 0.99 0.99 0.99 0.99 1 1 1 1 1 1 1 1 1 1 1 1 1 1 1 1 1 1 1 1 1 1 1 1 1 1 1 1 1 1 1 1 1 1 1 1 1 1 1 1 1 1 1 1 1 1 1 1 1 1 1 1 1 1 1 1 1 1 1 1 1 1"/></feComponentTransfer></filter><radialGradient id="rg"><stop offset="0" stop-color="#fff"/><stop offset=".02" stop-color="#fff"/><stop offset=".03" stop-color="#f00"/><stop offset=".1" stop-color="#ff1400"/><stop offset=".25" stop-color="#ff9000"/><stop offset=".41" stop-color="#ff0"/><stop offset=".54" stop-color="#90ff00"/><stop offset=".68" stop-color="#00ff10"/><stop offset=".8" stop-color="#00ffa0"/><stop offset=".885" stop-color="#0ff"/><stop offset=".94" stop-color="#0080ff"/><stop offset=".985" stop-color="#0010ff"/><stop offset="1" stop-color="#0000ff"/></radialGradient></defs><rect x="475" y="167" width="541" height="270" fill="#e6ad4c"/><rect x="475" y="167" width="541" height="270" filter="url(#nz)"/><rect x="475" y="437" width="265" height="265" fill="#f0f"/><circle cx="602.4" cy="560.3" r="37.3" fill="url(#rg)" shape-rendering="crispEdges"/><g stroke="#969696" stroke-width="1" fill="none"><path d="M447.5 96V774"/><path d="M453 779.5H1039"/><path d="M447.5 702.5H453"/><path d="M474.5 773.5V779.5"/><path d="M447.5 596.5H451.5"/><path d="M580.5 773.5V779.5"/><path d="M447.5 491.5H451.5"/><path d="M686.5 773.5V779.5"/><path d="M447.5 385.5H451.5"/><path d="M791.5 773.5V779.5"/><path d="M447.5 280.5H451.5"/><path d="M897.5 773.5V779.5"/><path d="M447.5 174.5H451.5"/><path d="M1002.5 773.5V779.5"/></g></svg>
<span class="t " style="left:432.66px;top:693px;font-size:15px;line-height:17px;color:#969696;">0</span>
<span class="t " style="left:470.53px;top:782px;font-size:15px;line-height:17px;color:#969696;">0</span>
<span class="t " style="left:414.88px;top:588px;font-size:15px;line-height:17px;letter-spacing:0.550px;color:#969696;">100</span>
<span class="t " style="left:567.24px;top:782px;font-size:15px;line-height:17px;letter-spacing:0.550px;color:#969696;">100</span>
<span class="t " style="left:414.88px;top:482px;font-size:15px;line-height:17px;letter-spacing:0.550px;color:#969696;">200</span>
<span class="t " style="left:672.84px;top:782px;font-size:15px;line-height:17px;letter-spacing:0.550px;color:#969696;">200</span>
<span class="t " style="left:414.88px;top:376px;font-size:15px;line-height:17px;letter-spacing:0.550px;color:#969696;">300</span>
<span class="t " style="left:778.44px;top:782px;font-size:15px;line-height:17px;letter-spacing:0.550px;color:#969696;">300</span>
<span class="t " style="left:414.88px;top:271px;font-size:15px;line-height:17px;letter-spacing:0.550px;color:#969696;">400</span>
<span class="t " style="left:884.04px;top:782px;font-size:15px;line-height:17px;letter-spacing:0.550px;color:#969696;">400</span>
<span class="t " style="left:414.88px;top:165px;font-size:15px;line-height:17px;letter-spacing:0.550px;color:#969696;">500</span>
<span class="t " style="left:989.64px;top:782px;font-size:15px;line-height:17px;letter-spacing:0.550px;color:#969696;">500</span>
<svg style="left:399px;top:455px" width="4" height="18" viewBox="0 0 4 18"><g fill="#c4c4c4"><rect x="1" y="1" width="1" height="1"/><rect x="1" y="4" width="1" height="1"/><rect x="1" y="7" width="1" height="1"/><rect x="1" y="10" width="1" height="1"/><rect x="1" y="13" width="1" height="1"/><rect x="1" y="16" width="1" height="1"/></g></svg>
<svg style="left:716px;top:808px" width="18" height="4" viewBox="0 0 18 4"><g fill="#c4c4c4"><rect x="1" y="1" width="1" height="1"/><rect x="4" y="1" width="1" height="1"/><rect x="7" y="1" width="1" height="1"/><rect x="10" y="1" width="1" height="1"/><rect x="13" y="1" width="1" height="1"/><rect x="16" y="1" width="1" height="1"/></g></svg>
<span class="t " style="left:402.80px;top:817px;font-size:15px;line-height:17px;letter-spacing:0.024px;">Pixel position and intensity:</span>
<div class="cb" style="left:788px;top:818px;width:14px;height:14px;"></div>
<span class="t " style="left:807.10px;top:817px;font-size:15px;line-height:17px;letter-spacing:-0.157px;">Crosshair locker</span>
<div class="btn" style="left:967px;top:812px;width:80px;height:27px;"></div>
<span class="t " style="left:983.30px;top:817px;font-size:15px;line-height:17px;letter-spacing:-0.559px;">Axes ...</span>
<div class="le" style="left:403px;top:845px;width:512px;height:27px;"></div>
<span class="t " style="left:405.30px;top:850px;font-size:15px;line-height:17px;letter-spacing:0.417px;">x = -19.000000, y = 300.000000, intensity = 0.00</span>
<div class="btn" style="left:921px;top:845px;width:126px;height:27px;"></div>
<span class="t " style="left:926.10px;top:850px;font-size:15px;line-height:17px;letter-spacing:-0.421px;font-weight:bold;">Intensity</span>
<svg class="a" style="left:1031.3px;top:856.8px" width="8" height="4" viewBox="0 0 8 4"><path d="M0 0H8L4 4Z" fill="#4b4b4b"/></svg>
</div></body></html>
